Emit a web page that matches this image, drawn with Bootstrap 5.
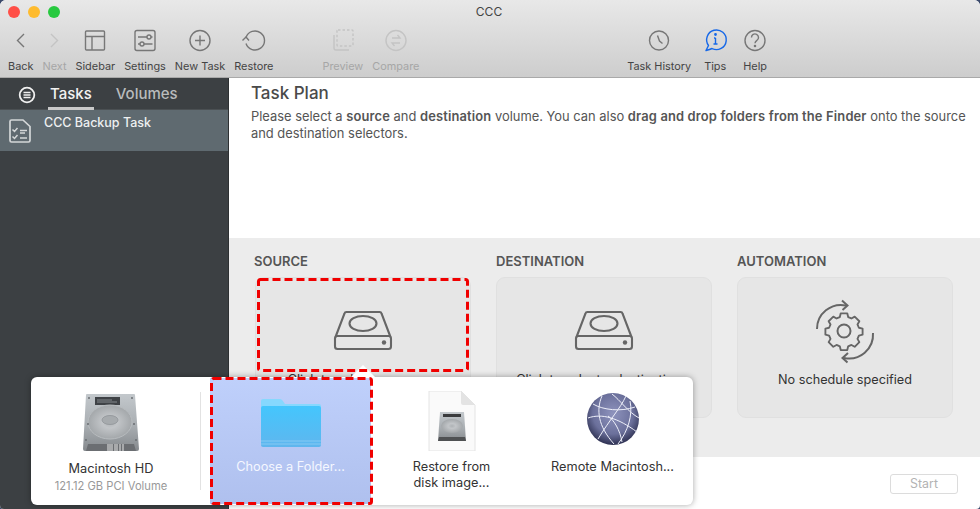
<!DOCTYPE html>
<html lang="en">
<head>
  <meta charset="utf-8">
  <title>CCC</title>
  <link href="https://cdn.jsdelivr.net/npm/bootstrap@5.3.0/dist/css/bootstrap.min.css" rel="stylesheet">
  <style>
    html, body { height: 100%; }
    body { background: #3b4a6b; font-family: Inter, "Liberation Sans", sans-serif; overflow: hidden; }
    .app-window { width: 980px; height: 509px; background: #fff; border-radius: 6px 6px 4px 4px; overflow: hidden; position: relative; }

    .app-top { height: 78px; background: linear-gradient(#e8e8e8, #cdcdcd); border-bottom: 1px solid #a9a9a9; }
    .title-row { display: grid; grid-template-columns: 1fr auto 1fr; height: 23px; align-items: center; padding: 0 10px 0 8px; font-size: 12px; color: #444; }
    .light { width: 12px; height: 12px; border-radius: 50%; }
    .tool-row { padding-left: 8px; height: 54px; }
    .tool-group { gap: 9px; }
    .tool-group-mid { margin-left: 49px; }
    .tool-group-end { margin-left: auto; margin-right: 213px; gap: 13px; }
    .tool-item { display: flex; flex-direction: column; align-items: center; font-size: 10.9px; line-height: 13px; color: #444; white-space: nowrap; }
    .tool-item svg { display: block; height: 34px; width: 34px; margin: 0 -12px 3px; stroke: #777; fill: none; stroke-width: 1.4; }
    .tool-off { color: #a6a6a6; }
    .tool-off svg { stroke: #c4c4c4; }
    .tool-tips svg { stroke: #1668e8; }
    .tool-help { margin-left: 4px; }

    .app-body { height: 431px; }
    .side-pane { width: 229px; background: #3c4043; border-right: 1px solid #2e3133; flex: none; }
    .side-tabs { height: 32px; padding-left: 18px; border-bottom: 1px solid #4b5053; }
    .side-tab { font-size: 15px; line-height: 27px; color: #b9bbbc; padding: 2px 2px 0; font-weight: 500; }
    .side-tab-on { color: #f2f2f2; border-bottom: 3px solid #c9c9c9; margin-left: 12px; margin-right: 20px; }
    .task-row { height: 41px; background: #5f6a70; display: flex; gap: 12px; padding: 5px 0 0 8px; font-size: 12.5px; font-weight: 500; color: #eef0f0; line-height: 15px; }
    .task-row svg { margin-top: 3px; flex: none; }

    .main-pane { min-width: 0; }
    .plan-head { height: 160px; padding: 5px 4px 0 22px; color: #555; }
    .plan-title { font-size: 17px; font-weight: 500; line-height: 21px; margin: 0 0 4px; color: #4a4a4a; }
    .plan-text { font-size: 12.9px; line-height: 17px; margin: 0; }
    .plan-text b { font-weight: 600; letter-spacing: .16px; }
    .plan-grid { height: 219px; background: #ececec; padding: 15px 0 0 26px; gap: 25px; }
    .slot { width: 216px; }
    .slot-label { font-size: 13px; font-weight: 600; color: #555; line-height: 16px; margin-bottom: 8px; }
    .slot-label-first { margin-left: -1px; }
    .slot-card { height: 141px; background: #e6e6e6; border: 1px solid #e0e0e0; border-radius: 9px; text-align: center; font-size: 12.7px; line-height: 18px; color: #333; padding-top: 30px; }
    .slot-card svg { display: block; margin: 0 auto 17px; stroke: #666; fill: none; }
    .slot-auto { padding-top: 20px; }
    .slot-card .auto-icon { margin-bottom: 5px; }
    .plan-foot { flex: 1; padding: 17px 22px 0 0; }
    .start-btn { width: 68px; height: 20px; padding: 0; font-size: 12.4px; line-height: 18px; color: #b3b3b3; background: #fff; border: 1px solid #dcdcdc; border-radius: 3px; }

    .picker { position: absolute; left: 31px; top: 377px; width: 662px; height: 128px; background: #fff; border-radius: 6px; box-shadow: 0 0 6px rgba(0,0,0,.35); }
    .picker-arrow { position: absolute; left: 320px; top: -12px; width: 24px; height: 12px; background: #fff; clip-path: polygon(50% 0, 100% 100%, 0 100%); }
    .pick-cell { width: 161px; flex: none; text-align: center; padding-top: 14px; font-size: 12.75px; line-height: 16px; color: #333; }
    .pick-cell svg { display: block; margin: 0 auto 8px; }
    .pick-hd { width: 160px; margin-right: 9px; padding-top: 16px; }
    .pick-sub { font-size: 11.2px; color: #999; line-height: 19px; }
    .pick-sel { background: linear-gradient(#bfd0fb, #afc0ee); color: #f4f7ff; margin: 1px 0; padding-top: 13px; }
    .pick-rule { width: 1px; height: 98px; background: #e2e2e2; margin: 15px 9px 0 0; flex: none; }
    .mark-box { position: absolute; left: 0; top: 0; pointer-events: none; }
  </style>
</head>
<body>
  <div class="app-window">
    <!-- toolbar -->
    <header class="app-top">
      <div class="title-row">
        <div class="d-flex gap-2">
          <span class="light" style="background:#ff4f47"></span>
          <span class="light" style="background:#febb2e"></span>
          <span class="light" style="background:#27c93f"></span>
        </div>
        <div>CCC</div>
        <div></div>
      </div>
      <div class="tool-row d-flex">
        <div class="tool-group d-flex">
          <div class="tool-item"><svg viewBox="0 0 34 34"><path d="M20 11l-6.500 6.500 6.500 6.500"/></svg>Back</div>
          <div class="tool-item tool-off"><svg viewBox="0 0 34 34"><path d="M14 11l6.500 6.500-6.500 6.500"/></svg>Next</div>
          <div class="tool-item"><svg viewBox="0 0 34 34"><rect x="7.500" y="8" width="19" height="19" rx="1"/><path d="M7.500 13.500h19M14 13.500V27"/></svg>Sidebar</div>
          <div class="tool-item"><svg viewBox="0 0 34 34"><rect x="7" y="7.500" width="20" height="20" rx="2"/><path d="M10 14h9M23 14h1.500M10 21h2M16 21h8.500"/><circle cx="21" cy="14" r="2"/><circle cx="14" cy="21" r="2"/></svg>Settings</div>
          <div class="tool-item"><svg viewBox="0 0 34 34"><circle cx="17" cy="17.500" r="10"/><path d="M17 12.500v10M12 17.500h10"/></svg>New Task</div>
          <div class="tool-item"><svg viewBox="0 0 34 34"><path d="M9 14.500A9.500 9.500 0 1 1 9 20.500"/><path d="M5.500 17.500l3.500-3.500 3 3.500"/></svg>Restore</div>
        </div>
        <div class="tool-group tool-group-mid d-flex">
          <div class="tool-item tool-off"><svg viewBox="0 0 34 34"><rect x="11" y="7" width="16" height="16" rx="1" stroke-dasharray="2.500 2"/><path d="M8 12v13a2 2 0 0 0 2 2h13"/></svg>Preview</div>
          <div class="tool-item tool-off"><svg viewBox="0 0 34 34"><circle cx="17" cy="17.500" r="10"/><path d="M13 15h8l-2.500-3M21 20h-8l2.500 3"/></svg>Compare</div>
        </div>
        <div class="tool-group tool-group-end d-flex">
          <div class="tool-item"><svg viewBox="0 0 34 34"><circle cx="17" cy="17.500" r="9.500"/><path d="M15.500 12.500l2 5.500 3 2.500"/></svg>Task History</div>
          <div class="tool-item tool-tips"><svg viewBox="0 0 34 34"><path d="M8 27.500l2.500-5A9.800 9.800 0 1 1 14 25.500c-2 1-4 1.500-6 2z" stroke-linejoin="round"/><path d="M17.500 15v6M16 15h1.500M15.500 21h4"/><circle cx="17.500" cy="11.500" r=".7"/></svg>Tips</div>
          <div class="tool-item tool-help"><svg viewBox="0 0 34 34"><circle cx="17" cy="17.500" r="10"/><path d="M13.500 14.500a3.500 3.500 0 1 1 5.500 2.800c-1.300 1-2 1.500-2 3"/><circle cx="17" cy="23" r=".6"/></svg>Help</div>
        </div>
      </div>
    </header>

    <div class="app-body d-flex">
      <!-- sidebar -->
      <aside class="side-pane">
        <div class="side-tabs d-flex align-items-start">
          <svg width="18" height="18" viewBox="0 0 18 18" class="mt-2" fill="none" stroke="#f0f0f0"><circle cx="9" cy="9" r="7.300" stroke-width="1.800"/><path d="M5.500 6.500h7M5.500 9h7M5.500 11.500h7" stroke-width="1.400"/></svg>
          <div class="side-tab side-tab-on">Tasks</div>
          <div class="side-tab">Volumes</div>
        </div>
        <div class="task-row">
          <svg width="24" height="26" viewBox="0 0 24 26" fill="none" stroke="#d4d7d8" stroke-width="1.700"><path d="M2 3.500a1.500 1.500 0 0 1 1.500-1.500H15l7 6.500v14a1.500 1.500 0 0 1-1.500 1.500h-17A1.500 1.500 0 0 1 2 22.500z"/><path d="M4.500 11.500l2 2 3-3.500M4.500 18.500l2 2 3-3.500M12 12.500h7M12 15h5M12 20h7" stroke-width="1.500"/></svg>
          <span>CCC Backup Task</span>
        </div>
      </aside>

      <!-- task plan -->
      <main class="main-pane d-flex flex-column flex-grow-1">
        <section class="plan-head">
          <h1 class="plan-title">Task Plan</h1>
          <p class="plan-text">Please select a <b>source</b> and <b>destination</b> volume. You can also <b>drag and drop folders from the Finder</b> onto the source and destination selectors.</p>
        </section>
        <section class="plan-grid d-flex">
          <div class="slot">
            <div class="slot-label slot-label-first">SOURCE</div>
            <div class="slot-card">
              <svg width="60" height="46" viewBox="0 0 60 46" stroke-width="2.100"><path d="M2.500 29L11.500 5.500a2 2 0 0 1 2-1.500h33a2 2 0 0 1 2 1.500L57.500 29"/><rect x="2" y="28" width="56" height="13" rx="2.500"/><ellipse cx="30" cy="15.500" rx="13.500" ry="7.500"/><circle cx="51" cy="34.500" r="2.200" fill="#666" stroke="none"/></svg>
              Click to select a source...
            </div>
          </div>
          <div class="slot">
            <div class="slot-label">DESTINATION</div>
            <div class="slot-card">
              <svg width="60" height="46" viewBox="0 0 60 46" stroke-width="2.100"><path d="M2.500 29L11.500 5.500a2 2 0 0 1 2-1.500h33a2 2 0 0 1 2 1.500L57.500 29"/><rect x="2" y="28" width="56" height="13" rx="2.500"/><ellipse cx="30" cy="15.500" rx="13.500" ry="7.500"/><circle cx="51" cy="34.500" r="2.200" fill="#666" stroke="none"/></svg>
              Click to select a destination...
            </div>
          </div>
          <div class="slot">
            <div class="slot-label">AUTOMATION</div>
            <div class="slot-card slot-auto">
              <svg width="60" height="68" viewBox="0 0 60 68" stroke-width="2" class="auto-icon"><path d="M2 31A24 24 0 0 1 31 7.500"/><path d="M27 2.500l5.500 5-5 4.500"/><path d="M58 35A24 24 0 0 1 29 60"/><path d="M33 55l-5.500 5 5 4.500"/><circle cx="29" cy="33" r="6.500"/><path d="M26.500 14.500h7l1 4 3.500 1.500 3.500-2 5 5-2 3.500 1.500 3.500 4 1v6.500l-4 1-1.500 3.500 2 3.500-5 5-3.500-2-3.500 1.500-1 4h-7l-1-4-3.500-1.500-3.500 2-5-5 2-3.500-1.500-3.500-4-1v-6.500l4-1 1.500-3.500-2-3.500 5-5 3.500 2 3.500-1.500z" stroke-linejoin="round" transform="translate(29 33) scale(.93) translate(-30 -33.500)"/></svg>
              No schedule specified
            </div>
          </div>
        </section>
        <footer class="plan-foot d-flex justify-content-end">
          <button type="button" class="btn start-btn">Start</button>
        </footer>
      </main>
    </div>

    <!-- volume picker popover -->
    <div class="picker d-flex">
      <div class="picker-arrow"></div>
      <div class="pick-cell pick-hd">
        <svg width="58" height="60" viewBox="0 0 58 60">
          <defs>
            <linearGradient id="hdBody" x1="0" y1="0" x2="0" y2="1"><stop offset="0" stop-color="#c3c8cc"/><stop offset=".55" stop-color="#a9aeb2"/><stop offset="1" stop-color="#85898d"/></linearGradient>
            <radialGradient id="hdDisc"><stop offset="0" stop-color="#aeb2b5"/><stop offset=".35" stop-color="#c2c5c8"/><stop offset="1" stop-color="#a3a7aa"/></radialGradient>
          </defs>
          <path d="M5 1h47a1 1 0 0 1 1 1l4 54a2 2 0 0 1-2 2H3a2 2 0 0 1-2-2L4 2a1 1 0 0 1 1-1z" fill="url(#hdBody)"/>
          <rect x="13" y="4" width="25" height="8" fill="#3f4246"/>
          <path d="M15 7h15M15 9h20" stroke="#85898d"/>
          <ellipse cx="28" cy="29" rx="22" ry="17" fill="url(#hdDisc)" stroke="#b8bcbf"/>
          <ellipse cx="28" cy="27" rx="8" ry="4.500" fill="#a7abae" stroke="#979b9f"/>
          <g fill="#6a6e72"><circle cx="7" cy="5" r="1"/><circle cx="50" cy="5" r="1"/><circle cx="6" cy="31" r="1"/><circle cx="52" cy="31" r="1"/><circle cx="4" cy="47" r="1"/><circle cx="54" cy="47" r="1"/></g>
          <path d="M6 51h46l2 7H4z" fill="#6b6e72"/>
          <path d="M26 51v7M28 51v7M30 51v7M33 51v7M35 51v7M38 51v7M41 51v7" stroke="#e6e6e6" stroke-width="1"/>
        </svg>
        <div>Macintosh HD</div>
        <div class="pick-sub">121.12 GB PCI Volume</div>
      </div>
      <div class="pick-rule"></div>
      <div class="pick-cell pick-sel">
        <svg width="60" height="60" viewBox="0 0 60 60">
          <defs><linearGradient id="folderFace" x1="0" y1="0" x2="0" y2="1"><stop offset="0" stop-color="#44c6fd"/><stop offset="1" stop-color="#5fb6ee"/></linearGradient></defs>
          <path d="M0 10a2 2 0 0 1 2-2h17a3 3 0 0 1 2.500 1.500L24 13h34a2 2 0 0 1 2 2v8H0z" fill="#86d8fe"/>
          <path d="M0 17a2 2 0 0 1 2-2h56a2 2 0 0 1 2 2v37a2 2 0 0 1-2 2H2a2 2 0 0 1-2-2z" fill="url(#folderFace)"/>
          <path d="M0 50h60M0 53h60" stroke="#86c9f3" stroke-width="1"/>
        </svg>
        Choose a Folder...
      </div>
      <div class="pick-cell">
        <svg width="48" height="60" viewBox="0 0 48 60">
          <path d="M1 0h32l14 14v46H1z" fill="#fafafa" stroke="#e4e4e4"/>
          <path d="M33 0v12a2 2 0 0 0 2 2h12z" fill="#e3e3e3"/>
          <path d="M12 21h24l2 29H10z" fill="url(#hdBody)"/>
          <rect x="15" y="23" width="18" height="3" fill="#3a3b3d"/>
          <ellipse cx="24" cy="35" rx="11" ry="7" fill="url(#hdDisc)"/>
          <path d="M11 46h26l1 4H10z" fill="#4f5153"/>
        </svg>
        Restore from<br>disk image...
      </div>
      <div class="pick-cell">
        <svg width="54" height="60" viewBox="0 0 54 60">
          <defs><radialGradient id="globeFill" cx=".5" cy=".4" r=".6"><stop offset="0" stop-color="#8e93bd"/><stop offset=".65" stop-color="#6b709b"/><stop offset="1" stop-color="#2e3152"/></radialGradient></defs>
          <circle cx="27" cy="28" r="26" fill="url(#globeFill)"/>
          <g fill="none" stroke="#eef0fa" stroke-width="1">
            <path d="M7 13c10 6 28 8 42 3M2 27c14-5 30 0 49 14M16 5c-6 14-4 30 12 48M40 5C34 18 24 28 12 48M44 10c3 14-2 30-12 43M22 25c6 4 12 14 14 26M26 3c8 6 16 18 27 24"/>
          </g>
        </svg>
        Remote Macintosh...
      </div>
    </div>

    <!-- red marks from the screenshot -->
    <svg class="mark-box" width="980" height="509" fill="none" stroke="#f00000" stroke-width="3" stroke-dasharray="8 4">
      <rect x="258.500" y="279.500" width="209" height="91" rx="2"/>
      <rect x="211.500" y="378.500" width="160" height="125" rx="2"/>
    </svg>
  </div>
</body>
</html>
